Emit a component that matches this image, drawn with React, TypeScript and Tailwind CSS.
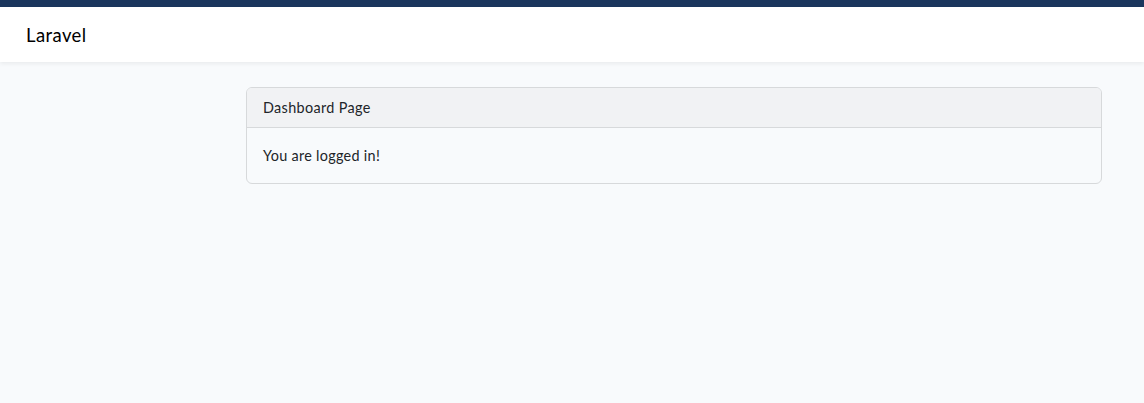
import React from 'react';

const App: React.FC = () => {
  return (
    <div
      className="min-h-[403px] bg-[#f8fafc] text-[#212529]"
      style={{ fontFamily: 'Lato, "Noto Sans", sans-serif' }}
    >
      <div className="h-[7px] bg-[#1b365d]" />
      <nav className="bg-white h-[55px] flex items-center px-[26px] shadow-[0_2px_4px_rgba(0,0,0,0.06)]">
        <span className="text-[18.5px] leading-[28px] tracking-[0.4px] text-black">Laravel</span>
      </nav>
      <main className="pt-[25px] pl-[246px] pr-[42px]">
        <div className="border border-[#d7d9db] rounded-[6px] overflow-hidden">
          <div className="bg-[#f1f2f4] border-b border-[#d7d9db] px-4 h-[40px] flex items-center text-[14.4px] tracking-[0.35px]">
            Dashboard Page
          </div>
          <div className="px-4 h-[55px] flex items-center text-[14.4px] tracking-[0.3px]">
            You are logged in!
          </div>
        </div>
      </main>
    </div>
  );
};

export default App;
